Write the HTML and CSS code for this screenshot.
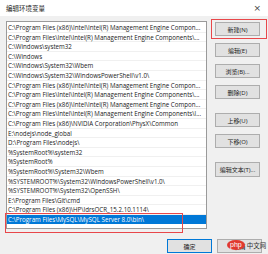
FILE: index.html
```html
<!DOCTYPE html>
<html>
<head>
<meta charset="utf-8">
<link rel="stylesheet" href="styles.css">
</head>
<body>
<div class="dialog">
  <div class="titlebar">
    <span class="title">编辑环境变量</span>
    <span class="close">×</span>
  </div>
  <div class="main">
    <div class="list">
      <div class="row">C:\Program Files (x86)\Intel\Intel(R) Management Engine Compon...</div>
      <div class="row">C:\Program Files\Intel\Intel(R) Management Engine Components\...</div>
      <div class="row">C:\Windows\system32</div>
      <div class="row">C:\Windows</div>
      <div class="row">C:\Windows\System32\Wbem</div>
      <div class="row">C:\Windows\System32\WindowsPowerShell\v1.0\</div>
      <div class="row">C:\Program Files (x86)\Intel\Intel(R) Management Engine Compon...</div>
      <div class="row">C:\Program Files\Intel\Intel(R) Management Engine Components\...</div>
      <div class="row">C:\Program Files (x86)\Intel\Intel(R) Management Engine Compon...</div>
      <div class="row">C:\Program Files\Intel\Intel(R) Management Engine Components\l...</div>
      <div class="row">C:\Program Files (x86)\NVIDIA Corporation\PhysX\Common</div>
      <div class="row">E:\nodejs\node_global</div>
      <div class="row">D:\Program Files\nodejs\</div>
      <div class="row">%SystemRoot%\system32</div>
      <div class="row">%SystemRoot%</div>
      <div class="row">%SystemRoot%\System32\Wbem</div>
      <div class="row">%SYSTEMROOT%\System32\WindowsPowerShell\v1.0\</div>
      <div class="row">%SYSTEMROOT%\System32\OpenSSH\</div>
      <div class="row">E:\Program Files\Git\cmd</div>
      <div class="row">C:\Program Files (x86)\HP\IdrsOCR_15.2.10.1114\</div>
      <div class="row selected">C:\Program Files\MySQL\MySQL Server 8.0\bin\<span class="mark mark-row"></span></div>
    </div>
    <div class="side">
      <div class="btn">新建(N)<span class="mark mark-btn"></span></div>
      <div class="btn">编辑(E)</div>
      <div class="btn">浏览(B)...</div>
      <div class="btn">删除(D)</div>
      <div class="btn gap">上移(U)</div>
      <div class="btn">下移(O)</div>
      <div class="btn gap2">编辑文本(T)...</div>
    </div>
  </div>
  <div class="footer">
    <div class="btn default">确定</div>
    <div class="btn">取消</div>
    <div class="watermark"><span class="php">php</span><span class="cn">中文网</span></div>
  </div>
</div>
</body>
</html>
```

FILE: styles.css
```css
html, body {
  margin: 0;
  padding: 0;
}
body {
  width: 268px;
  height: 254px;
  overflow: hidden;
  background: #f0f0f0;
  font-family: "Open Sans", "Noto Sans CJK SC", sans-serif;
  color: #1a1a1a;
}
.dialog {
  width: 268px;
  height: 254px;
  display: flex;
  flex-direction: column;
  position: relative;
}
.titlebar {
  height: 16px;
  background: #fff;
  display: flex;
  align-items: center;
  justify-content: space-between;
  padding: 0 6px;
  box-sizing: border-box;
}
.title {
  font-size: 6.5px;
  color: #222;
}
.close {
  font-size: 9px;
  color: #444;
  font-family: "DejaVu Sans", sans-serif;
  margin-right: 1px;
}
.main {
  display: flex;
  padding: 5px 0 0 6px;
}
.list {
  width: 201px;
  height: 208px;
  box-sizing: border-box;
  border: 1px solid #9a9a9a;
  background: #fff;
  padding-top: 1px;
  position: relative;
}
.row {
  height: 9.6px;
  line-height: 9.6px;
  font-size: 6.2px;
  padding-left: 1px;
  white-space: nowrap;
  overflow: visible;
  border-bottom: 0.5px solid #f0f0f0;
  box-sizing: border-box;
  position: relative;
}
.row.selected {
  background: #0078d7;
  color: #fff;
  border-bottom: none;
}
.mark {
  position: absolute;
  border: 1.5px solid #e8474a;
  box-sizing: border-box;
  pointer-events: none;
}
.mark-row {
  left: -2px;
  top: -2px;
  width: 178px;
  height: 20px;
}
.side {
  display: flex;
  flex-direction: column;
  margin-left: 8px;
  padding-top: 1px;
  gap: 7px;
}
.btn {
  width: 45px;
  height: 14px;
  box-sizing: border-box;
  background: #e1e1e1;
  border: 1px solid #adadad;
  font-size: 6px;
  display: flex;
  align-items: center;
  justify-content: center;
  position: relative;
  color: #1a1a1a;
}
.btn.gap {
  margin-top: 7px;
}
.btn.gap2 {
  margin-top: 7px;
  height: 15px;
}
.mark-btn {
  left: -5px;
  top: -4px;
  width: 56px;
  height: 20px;
}
.footer {
  display: flex;
  gap: 5px;
  padding: 10px 0 0 167px;
  position: relative;
}
.btn.default {
  border-color: #0078d7;
}
.watermark {
  position: absolute;
  left: 227px;
  top: 11px;
  display: flex;
  align-items: center;
  gap: 2px;
}
.php {
  background: #e0392f;
  color: #fff;
  border-radius: 50%;
  font-size: 7px;
  font-family: "Liberation Sans", sans-serif;
  padding: 1px 3px;
  line-height: 8px;
}
.cn {
  font-size: 6.5px;
  color: #333;
}
```
